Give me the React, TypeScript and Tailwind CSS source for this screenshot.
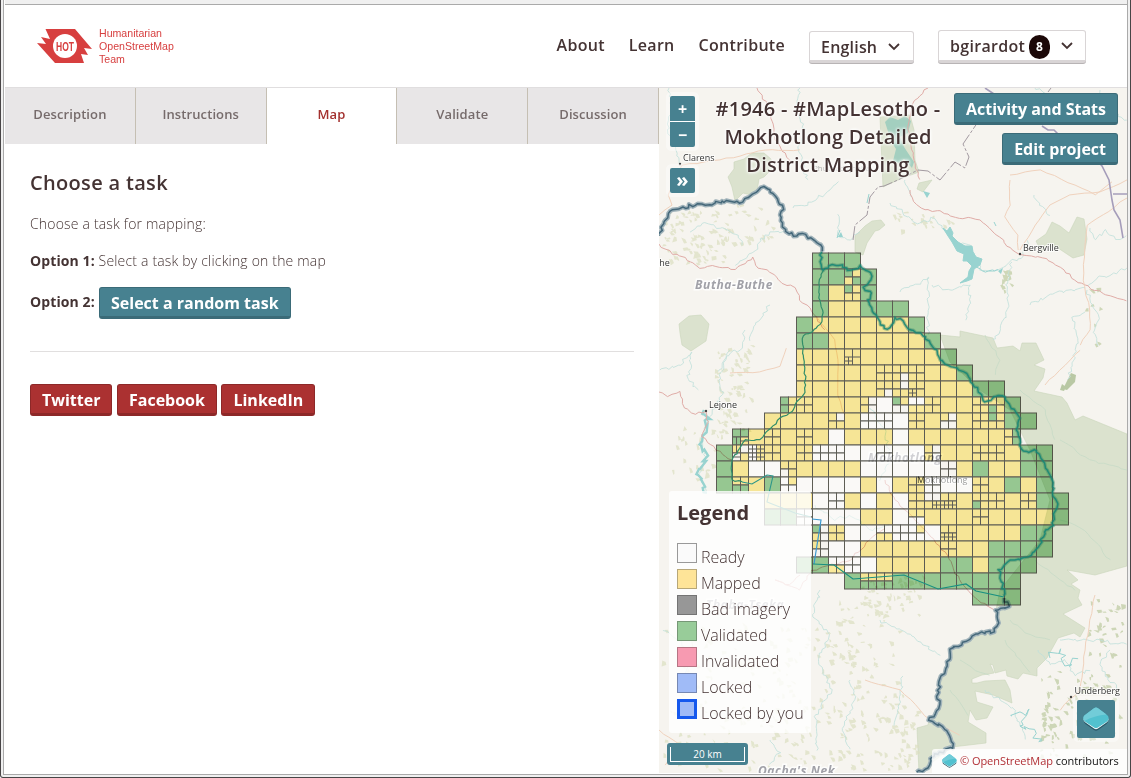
import React from "react";

type Pt = [number, number];

function wiggle(points: Pt[], amp: number, step = 4, seed = 7): string {
  let s = seed;
  const rnd = () => {
    s = (s * 16807) % 2147483647;
    return s / 2147483647 - 0.5;
  };
  let d = `M${points[0][0]} ${points[0][1]}`;
  for (let i = 1; i < points.length; i++) {
    const [x0, y0] = points[i - 1];
    const [x1, y1] = points[i];
    const n = Math.max(1, Math.round(Math.hypot(x1 - x0, y1 - y0) / step));
    for (let k = 1; k <= n; k++) {
      const t = k / n;
      const j = k === n ? 0.5 : 1;
      d += `L${(x0 + (x1 - x0) * t + rnd() * amp * 2 * j).toFixed(1)} ${(y0 + (y1 - y0) * t + rnd() * amp * 2 * j).toFixed(1)}`;
    }
  }
  return d;
}

const ROWS: string[] = [
  "......GGG.............",
  "......GGYG............",
  "......GYYG............",
  "......GYYGGG..........",
  ".....GYYYYYYG.........",
  ".....GGYYYYYYG........",
  ".....YYYYYYYYYG.......",
  ".....YYYYYYYYYYG......",
  ".....YYYYYYYYYYYGG....",
  "....YYYYYYWYWYYYYYG...",
  "...YYYYYYWWWYYYYYYGG..",
  ".GYYYYYWYYYWYYYYYYY...",
  "GYWYYYWWWWWWWYYYYYYGG.",
  "GYWWYYYYYWWWWWYYGYYGG.",
  "GYYGWWWWWYWYYWWWYYGYG.",
  "...YYYWWYWYWYYYYYYYYGG",
  "...GGWWWWYYWWYYYYYYYYG",
  "......GYWWWWWWYYYYYGG.",
  "......YWWYYYYYYYYGGGG.",
  ".....GGWWWYYYYGGYGGG..",
  "........GYYGGGGGGGG...",
  "................GGG...",
];

const QUADS: [number, number, string][] = [
  [8, 1, "GYYG"], [8, 2, "GYYY"], [10, 7, "YYYY"], [11, 7, "YYYW"], [12, 7, "YYYY"],
  [10, 8, "YYYW"], [11, 8, "YWYY"], [12, 8, "YYYY"], [4, 9, "GYGY"], [5, 9, "YYYY"],
  [9, 9, "YWYW"], [11, 9, "GYWW"], [12, 9, "WWYY"], [13, 9, "YYYY"], [16, 9, "YYYY"],
  [17, 9, "YYGY"], [7, 10, "YWYY"], [9, 10, "WWWW"], [10, 10, "WWWW"], [12, 10, "YYYY"],
  [14, 10, "YWWW"], [16, 10, "YYYY"], [17, 10, "GYYY"], [1, 11, "GGGY"], [3, 11, "YYYY"],
  [5, 11, "YYYY"], [18, 11, "YGYG"], [1, 12, "YWWY"], [2, 12, "WYWY"], [3, 12, "YYYY"],
  [5, 12, "YYYY"], [6, 12, "WWWW"], [7, 12, "WWWW"], [10, 12, "WWWW"], [13, 12, "YWYW"],
  [16, 12, "YYYY"], [17, 12, "YYYY"], [4, 13, "YYWY"], [14, 13, "WWWW"], [1, 14, "YYGG"],
  [4, 14, "WYWW"], [12, 14, "YYYY"], [13, 14, "WWWW"], [16, 14, "YYYY"], [7, 15, "WWWW"],
  [12, 15, "YYYY"], [13, 15, "WWYY"], [14, 15, "YYYY"], [16, 15, "YYGY"], [17, 15, "YYYY"],
  [19, 15, "YYYY"], [5, 16, "WWWW"], [12, 16, "YYWW"], [16, 16, "YYYY"], [6, 17, "GWYW"],
  [7, 17, "YYYY"], [10, 17, "WWYY"], [11, 17, "WWWW"], [12, 17, "WYWW"], [14, 17, "YYYY"],
  [6, 18, "YWWW"], [14, 18, "YYYY"], [7, 19, "WWYY"], [8, 19, "WWWW"],
  [9, 20, "YYGG"], [10, 20, "YYGG"],
];

const FILL: Record<string, string> = { Y: "#fff0a0", G: "#9cd09b", W: "#ffffff" };
const X0 = 716.5;
const Y0 = 253;

function TaskGrid() {
  const cells: React.ReactNode[] = [];
  ROWS.forEach((row, r) =>
    row.split("").forEach((ch, c) => {
      if (ch === ".") return;
      const x = X0 + c * 16;
      const y = Y0 + r * 16;
      const quad = QUADS.find((q) => q[0] === c && q[1] === r);
      if (quad) {
        quad[2].split("").forEach((q, i) =>
          cells.push(
            <rect key={`${c}-${r}-${i}`} x={x + (i % 2) * 8} y={y + (i > 1 ? 8 : 0)} width="8" height="8" fill={FILL[q]} />
          )
        );
      } else {
        cells.push(<rect key={`${c}-${r}`} x={x} y={y} width="16" height="16" fill={FILL[ch]} />);
      }
    })
  );
  return (
    <g>
      <g fill="#fff" opacity=".5">
        {ROWS.map((row, r) =>
          row.split("").map((ch, c) =>
            ch === "W" ? <rect key={`${c}-${r}`} x={X0 + c * 16} y={Y0 + r * 16} width="16" height="16" /> : null
          )
        )}
      </g>
      <g className="mix-blend-multiply" stroke="#5f5f58" strokeWidth="1">{cells}</g>
      <g stroke="#5f5f58" strokeWidth="1">
        <path d="M852.5 349v16M844.5 357h16M848.5 357v8M844.5 361h8" />
        <path d="M912.5 389v8M908.5 393h8" />
        <path d="M752.5 445v16M760.5 445v16M748.5 449h16M748.5 457h16M736.5 437v16M732.5 457h8M740.5 441h8" />
        <path d="M936.5 501v8M944.5 501v8M952.5 501v8M932.5 505h24" />
        <path d="M944.5 533v8M952.5 533v8M940.5 537h16" />
        <path d="M868.5 581v8" />
      </g>
    </g>
  );
}

const BORDER_W: Pt[] = [[659,236],[663,224],[673,210],[685,208],[698,203],[712,205],[722,201],[742,202],[752,195],[764,187],[773,193],[783,206],[781,217],[785,229],[793,236],[803,234],[814,241],[821,245],[822,252]];
const BORDER_MID: Pt[] = [[822,252],[820,262],[823,271],[832,265],[842,265],[848,271],[860,266],[870,273],[871,280],[864,287],[872,293],[868,300],[873,311],[878,318],[884,329],[890,327],[895,317],[903,321],[909,330],[920,333],[930,343],[937,350],[940,360],[948,365],[957,368],[968,374],[973,385],[980,393],[985,402],[995,396],[1005,397],[1012,408],[1020,418],[1017,430],[1020,445],[1024,451],[1036,451],[1041,458],[1048,470],[1052,480],[1053,495],[1058,505],[1053,515],[1053,525],[1045,532],[1040,545],[1035,552],[1020,560],[1008,562],[999,570],[1002,582],[1004,596]];
const BORDER_S: Pt[] = [[1004,598],[1009,606],[996,610],[998,620],[995,632],[975,634],[963,643],[950,650],[948,665],[941,677],[938,690],[939,708],[929,720],[943,727],[951,738],[952,748],[940,752],[931,758],[928,768],[916,773]];

const RIVERS: Pt[][] = [
  [[704,410],[708,420],[702,440],[706,458],[698,475],[706,492]],
  [[730,350],[720,375],[722,395],[712,410],[708,422]],
  [[745,330],[740,350],[730,352],[718,372]],
  [[690,232],[705,223],[720,228],[738,235],[742,245]],
  [[786,230],[765,235],[755,250],[735,265]],
  [[793,208],[812,202],[830,190],[838,182]],
  [[770,305],[755,325],[750,340]],
  [[660,370],[680,365],[692,352]],[[692,352],[688,380],[698,390]],
  [[860,232],[850,240],[838,236],[838,215]],
  [[890,203],[903,212],[917,224],[935,218],[945,230],[955,242],[970,245],[980,270],[990,272],[1001,268],[1010,262],[1022,258],[1028,240]],
  [[932,285],[950,290],[970,285],[970,300],[965,320]],
  [[929,277],[928,310],[928,335]],[[900,292],[930,278]],
  [[1012,262],[1006,285],[1009,305],[1000,330],[992,340]],
  [[1034,195],[1040,205],[1050,216]],
  [[1090,228],[1096,240],[1106,230],[1115,240],[1127,236]],
  [[1088,286],[1098,278],[1110,275],[1127,268]],
  [[1087,290],[1092,305],[1100,318],[1094,330],[1098,345]],
  [[1085,312],[1072,318],[1078,340],[1073,360],[1068,380]],
  [[1030,305],[1055,293],[1085,288]],
  [[905,180],[908,187],[912,198]],
  [[800,88],[795,110],[805,130],[798,150],[808,180]],
  [[669,88],[672,105],[668,130],[676,150],[681,165]],
  [[1035,88],[1050,95],[1075,100]],[[1100,90],[1110,110],[1127,120]],
  [[820,590],[812,615],[830,635],[818,660],[832,690],[815,715],[817,750]],
  [[880,620],[910,635],[940,655]],
  [[850,680],[855,700],[842,730],[850,750]],
  [[903,676],[900,700],[894,725]],
  [[1038,650],[1050,665],[1065,660],[1075,675],[1090,670]],
  [[1060,640],[1090,640],[1127,644]],
  [[1110,650],[1100,665],[1108,680],[1120,690]],
  [[985,690],[1000,700],[1015,710],[1025,740]],
  [[815,505],[835,520],[850,515],[870,530],[890,525]],
  [[870,408],[885,430],[890,460],[880,480]],
  [[770,740],[780,752],[770,765]],
  [[663,630],[680,640],[690,660],[680,690]],
];

const PARK_STREAMS: Pt[][] = [
  [[985,335],[1000,360],[995,375]],[[1020,390],[1045,410],[1055,440]],[[1127,470],[1090,460],[1060,440]],
  [[1035,560],[1060,580],[1075,590]],[[1010,620],[1030,635],[1050,640]],[[1005,640],[1020,660],[1030,672]],
  [[1060,520],[1085,530],[1110,560]],[[960,660],[980,672],[990,675]],[[950,690],[962,705],[968,715]],
];

const ROADS_RED: Pt[][] = [
  [[659,244],[672,254],[685,258],[700,268],[715,266],[735,269],[745,264],[753,257],[758,268],[770,272],[782,283],[795,288],[800,300],[812,311],[825,330]],
  [[659,392],[668,396],[680,392],[684,408],[695,414],[706,411],[708,422],[702,436],[716,450],[732,460]],
  [[757,88],[770,110],[775,140],[790,160],[786,170]],
  [[928,88],[914,100],[908,130],[914,160],[920,180]],
  [[910,190],[914,202],[925,210],[940,211],[955,217],[980,220],[1000,237],[1010,248],[1020,254],[1042,258],[1060,267],[1075,280],[1095,290],[1110,296],[1127,301]],
  [[800,575],[790,585],[775,580],[800,590],[812,570],[850,560],[870,540],[885,528]],
  [[885,480],[895,500],[905,510],[925,530],[945,552],[960,580],[975,598],[995,610]],
];
const ROADS_TAN: Pt[][] = [
  [[659,215],[672,205],[668,195],[682,165],[720,160],[765,150],[800,150]],
  [[1010,180],[1010,205],[1005,217],[1018,235],[1018,250]],
  [[1020,250],[1035,225],[1050,205],[1070,195],[1100,192],[1127,180]],
  [[1010,175],[1040,170],[1075,185],[1095,195],[1112,182]],
  [[1127,198],[1108,212],[1087,225],[1085,250],[1083,280],[1090,310],[1090,330],[1080,345]],
  [[1045,385],[1065,365],[1080,350]],
  [[730,373],[760,372],[780,366],[786,348]],
  [[816,316],[835,340],[838,360],[838,395],[845,415]],
  [[1095,595],[1090,620],[1085,650],[1080,690],[1060,710]],
  [[865,680],[900,690],[930,720],[960,735]],
  [[659,730],[680,745],[665,765]],
];

const LAKE = "M943 228l4 3 3-4 3 6-1 3 6 6 7 4 7 0 1 6 3 5 6 2-2 6-6 4-2 10-5 2-7 2 8-6 1-6 3-5-5-5-4 0 1-7-7-3-5-9-4-6z";
const PARK = "M940 335L960 337V331L993 338L997 348L1013 346L1020 351L1022 343L1036 343L1044 360L1034 365L1045 369L1043 378L1034 391L1062 397L1067 403L1075 420L1083 416L1127 434V566L1095 575L1067 570L1078 580L1071 584L1080 590L1078 598L1082 605L1063 614L1085 628L1080 637L1074 633L1058 638L1047 658L1037 668V676L1023 673L1018 679L1007 676L1006 670L995 673L993 665L990 664L994 673L982 675L972 679V683H977L985 681L1005 680L1010 690L1012 703L993 695L975 691L977 702L993 707L987 718L976 720L970 710L968 722L986 733V743L952 747L919 773L917 728L928 725L929 720L940 710L938 690L948 665L950 650L963 643L975 634L995 632L998 620L996 610L1000 590L1040 540L1050 500L1030 450L1010 410L980 390L950 362Z";
const BLUE = "#98d3d0";

function speckles(cx: number, cy: number, w: number, h: number, n: number, seed: number): string {
  let s = seed * 7919;
  const rnd = () => {
    s = (s * 16807) % 2147483647;
    return s / 2147483647;
  };
  let d = "";
  for (let i = 0; i < n; i++) {
    d += `M${(cx + rnd() * w).toFixed(1)} ${(cy + rnd() * h).toFixed(1)}l${(1 + rnd() * 4).toFixed(1)} ${(rnd() * 3 - 1).toFixed(1)}l${(rnd() * 2).toFixed(1)} ${(1 + rnd() * 3).toFixed(1)}l-${(1 + rnd() * 4).toFixed(1)} ${(rnd() * 2).toFixed(1)}z`;
  }
  return d;
}

function District({ x, y, size = 12, children }: { x: number; y: number; size?: number; children: string }) {
  return (
    <text x={x} y={y} fontSize={size} fontStyle="italic" fontWeight="700" letterSpacing=".6" fill="#a1a1a8" stroke="#fff" strokeWidth="3" strokeOpacity=".8" paintOrder="stroke">
      {children}
    </text>
  );
}

function Place({ x, y, dx, dy, children }: { x: number; y: number; dx?: number; dy?: number; children: string }) {
  return (
    <g>
      {dx !== undefined && <circle cx={dx} cy={dy} r="1.2" fill="#444" />}
      <text x={x} y={y} fontSize="9" fill="#333" stroke="#fff" strokeWidth="2" strokeOpacity=".7" paintOrder="stroke">{children}</text>
    </g>
  );
}

function MapCanvas() {
  return (
    <svg viewBox="659 88 468 685" className="block h-full w-full" fontFamily="'Open Sans', 'Noto Sans', sans-serif" fill="none">
      <rect x="659" y="88" width="468" height="685" fill="#f6f4ef" />
      <g fill="#dbe2ce" stroke="#cad5ba" strokeWidth=".6">
        <path d="M734 162l10-3 8-6h12l7 6 1 10-8 8-5 2-2 12-6 4-8-2-8 8-3-14-4-10 6-8z" />
        <path d="M880 117l30-2 4 15 1 30 4 12-19 7-17 8z" />
        <path d="M919 183l13-3-9 12-6-3z" />
        <path d="M855 252v-16l10-10 7-5 9-1 4 5-6 5-4 1-8 12-4 12z" />
        <path d="M679 324l10-8 12-1 8 9-3 17-15 10-9-6-2-12z" />
        <path d={PARK} />
        <path d="M1036 241l10-7 6-12 8 4 9 7 8-16 7 2 3 20-3 16-11 3-15-10-11-2-6 7-2-6z" />
      </g>
      <path d="M1071 373l5 2-1 7-8 8-4-1zM1062 384l4 3-2 4-4-1z" fill="#b9c8a4" />
      <g fill="#dcdfc1" opacity=".7">
        <path d={speckles(662, 208, 65, 55, 80, 2)} />
        <path d={speckles(722, 200, 50, 45, 28, 3)} />
        <path d={speckles(715, 345, 35, 90, 75, 4)} />
        <path d={speckles(662, 620, 150, 150, 150, 5)} />
        <path d={speckles(812, 600, 90, 170, 150, 6)} />
        <path d={speckles(862, 575, 60, 40, 50, 8)} />
        <path d={speckles(897, 700, 20, 65, 24, 9)} />
        <path d={speckles(892, 212, 60, 18, 18, 10)} />
        <path d={speckles(670, 425, 45, 55, 24, 31)} />
      </g>
      <g fill="#bdcaa0" opacity=".7">
        <path d={speckles(1088, 595, 35, 60, 28, 11)} />
        <path d={speckles(1040, 665, 80, 90, 80, 12)} />
        <path d={speckles(1040, 705, 15, 40, 25, 14)} />
        <path d={speckles(1000, 270, 10, 18, 16, 15)} />
        <path d={speckles(1080, 285, 20, 60, 8, 16)} />
      </g>
      <g stroke="#bfdfdb" strokeWidth=".8">
        {RIVERS.map((p, i) => <path key={i} d={wiggle(p, 1.7, 3, i + 11)} />)}
      </g>
      <g stroke="#c6dac7" strokeWidth=".8">
        {PARK_STREAMS.map((p, i) => <path key={i} d={wiggle(p, 1.2, 5, i + 40)} />)}
      </g>
      <path d={wiggle(RIVERS[0], 3.2, 3, 90)} stroke={BLUE} strokeWidth="2.4" />
      <path d={LAKE} fill={BLUE} stroke={BLUE} strokeWidth="1" />
      <path d="M885 122l5-5 8 3 7-4 6 5-3 12-8 4 4 10 10 15-2 6-8-9-5 4-6-2 3-12-5-8z" fill="#a3cfbf" />
      <path d="M923 191l7 2-3 5zM998 271l5-3-2 6zM838 237l3-5 2 5z" fill={BLUE} />
      <g stroke={BLUE} strokeWidth="1">
        <path d={wiggle([[1050,658],[1060,650],[1065,665],[1077,660]], 4, 3, 99)} />
        <path d={wiggle([[1012,716],[1028,710],[1022,725],[1044,740]], 4, 3, 103)} />
        <path d={wiggle([[975,265],[985,272],[998,270]], 1, 3, 104)} />
        <path d="M869 194l-2 9M840 230l-3 8M994 222l2 4" />
      </g>
      <g stroke="#e0aca7" strokeWidth="1">
        {ROADS_RED.map((p, i) => <path key={i} d={wiggle(p, 1.2, 4, i + 60)} />)}
      </g>
      <g stroke="#f0d2bd" strokeWidth="1">
        {ROADS_TAN.map((p, i) => <path key={i} d={wiggle(p, 0.7, 7, i + 80)} />)}
      </g>
      <path d="M985 88l12 8M1042 126l6 4 6 0 6 6 12 2 14 10 16 18 7 14 3 20 2 10 6 10 3 18M1113 194h14" stroke="#a59dba" strokeWidth="1.6" />
      <path d="M853 240l2-15 12-10 3-18 8-10 6-1 14-6 20-10 10 1 12 9 15-18 10 6 4-11-6-13 19-28 14 4 12-6M1048 92l6-8" stroke="#a39aa1" strokeWidth="1" strokeDasharray="14 2 3 2" />
      <Place x={683} y={161} dx={680} dy={164}>Clarens</Place>
      <Place x={1023} y={251} dx={1020} dy={254}>Bergville</Place>
      <Place x={709} y={408} dx={706} dy={411}>Lejone</Place>
      <Place x={1074.5} y={694} dx={1071} dy={697}>Underberg</Place>
      <Place x={656} y={266}>the</Place>
      <Place x={917} y={483}>Mokhotlong</Place>
      <text x="813" y="171" fontSize="8" fill="#aaa">Phuthaditjhaba</text>
      <District x={695} y={289}>Butha-Buthe</District>
      <District x={868} y={462}>Mokhotlong</District>
      <District x={706} y={609}>Thaba-Tseka</District>
      <District x={758} y={775}>Qacha's Nek</District>
      {[BORDER_W, BORDER_S].map((p, i) => (
        <g key={i} strokeLinejoin="round">
          <path d={wiggle(p, 1.7, 3, 21 + i)} stroke="#a0b2b9" strokeWidth="4.4" />
          <path d={wiggle(p, 1.7, 3, 21 + i)} stroke="#45687a" strokeWidth="1.5" />
        </g>
      ))}
      <TaskGrid />
      <path d={wiggle(BORDER_MID, 1.5, 3, 33)} stroke="#3b8267" strokeOpacity=".4" strokeWidth="3.6" strokeLinejoin="round" />
      <path d={wiggle(BORDER_MID, 1.5, 3, 33)} stroke="#138675" strokeWidth="1.5" strokeOpacity=".85" />
      <path d={wiggle([[823,271],[819,283],[819,298],[823,310],[822,322],[812,332],[803,336],[803,350],[805,370],[805,392],[797,402],[792,412],[780,418],[771,428],[760,440],[745,440],[740,448],[733,458],[731,468],[732,480],[742,482]], 0.9, 3, 51)} stroke="#318d69" strokeWidth="1.2" />
      <path d="M742 482l10 2 15-9 6 1-6 26 28 11 16 4" stroke="#2c9589" strokeWidth="1.1" />
      <path d="M812 519l9 1-7 44" stroke="#3a98d0" strokeWidth="1.2" />
      <path d="M813 564l21 1 19 14 51-4 34 14 28-5 10 7 28 6" stroke="#189080" strokeWidth="1.2" />
    </svg>
  );
}

function Layers({ className }: { className: string }) {
  return (
    <svg viewBox="0 0 26 24" className={className}>
      <path d="M1 14q0 2 1.500 3L11 23q2 1.500 4 0l8.500-6q1.500-1 1.500-3l-2-3H3z" fill="#2b5968" />
      <path d="M.5 12q0 2 2 3.500l8.500 6q2 1.300 4 0l8.500-6q2-1.500 2-3.500l-2-2h-21z" fill="#fff" />
      <path d="M11 1.200q2-1.500 4 0l9 6.800q2 1.500 1.500 4 0 1.500-2 3L15 20.500q-2 1.300-4 0L2.500 15q-2-1.500-2-3Q0 9.500 2 8z" fill="#52c1cf" />
      <path d="M11 1.200q2-1.500 4 0l8.500 6.300Q11 8.500 1.500 14 0 12 .5 10q.5-1.500 1.500-2z" fill="#72ccd8" />
    </svg>
  );
}

const TEAL_BTN = "box-border flex h-8 items-center rounded-[3px] border border-b-[3px] border-[#3b6b78] bg-[#478190] px-[11px] pt-[2px] text-[16px] font-bold leading-[26px] text-white whitespace-nowrap";
const RED_BTN = "box-border flex h-8 items-center rounded-[3px] border border-b-[3px] border-[#8d2828] bg-[#ab3131] px-[11px] pt-[2px] text-[16px] font-bold leading-[26px] text-white whitespace-nowrap";

function Chevron() {
  return (
    <svg viewBox="0 0 12 8" className="h-2 w-3" fill="none" stroke="#433" strokeWidth="1.8">
      <path d="M1 1l5 5 5-5" />
    </svg>
  );
}

function Header() {
  return (
    <header className="flex h-[83px] shrink-0 border-b border-[#e0dedf] bg-white pl-8 pr-[41px]">
      <div className="mt-[23px] flex">
        <svg viewBox="0 0 56 36" className="h-9 w-14" aria-label="HOT">
          <path d="M8.500 1h29.500l17 20-8-1 4 7-7-1 3 9H18L0 15l9 1-5-7 9 2z" fill="#d73f3f" />
          <circle cx="28" cy="18" r="12" fill="#fff" />
          <text x="28" y="22.500" textAnchor="middle" fontFamily="'Liberation Sans', sans-serif" fontSize="12" fontWeight="700" fill="#d73f3f" textLength="18" lengthAdjust="spacingAndGlyphs">HOT</text>
        </svg>
        <div className="-mt-px ml-[6px] font-['Liberation_Sans',sans-serif] text-[10.600px] leading-[13px] text-[#d73f3f] whitespace-nowrap">
          Humanitarian<br />OpenStreetMap<br />Team
        </div>
      </div>
      <nav className="ml-auto flex text-[16px] font-semibold tracking-[0.300px] text-[#433]">
        <span className="mt-[28px] mr-[24px] leading-6">About</span>
        <span className="mt-[28px] mr-[24px] leading-6">Learn</span>
        <span className="mt-[28px] mr-[24px] leading-6">Contribute</span>
        <button className="mt-[26px] mr-6 flex h-8 w-[105px] items-center justify-between rounded-[3px] border border-b-[3px] border-[#d9d5d6] bg-white pl-[11px] pr-[13px] pt-[2px] font-semibold tracking-[0.200px] shadow-[0_1px_0_#b8b4b5]">
          English <Chevron />
        </button>
        <button className="mt-[25px] flex h-[33px] w-[148px] items-center rounded-[3px] border border-b-[3px] border-[#d9d5d6] bg-white pl-[11px] pr-3 font-semibold tracking-[0.300px] shadow-[0_1px_0_#b8b4b5]">
          bgirardot
          <span className="ml-1 mt-[2px] flex h-6 w-[21px] items-center justify-center rounded-full bg-[#1c0808] text-[12px] font-bold text-white">8</span>
          <span className="ml-auto"><Chevron /></span>
        </button>
      </nav>
    </header>
  );
}

function TaskPanel() {
  return (
    <main className="w-[654px] shrink-0 bg-white">
      <div className="flex h-14 text-[13px] font-semibold tracking-[0.100px]">
        {["Description", "Instructions", "Map", "Validate", "Discussion"].map((t) => (
          <div
            key={t}
            className={`flex w-[130.800px] items-start justify-center border-r border-[#c5bfb3] pt-4 leading-5 ${t === "Map" ? "bg-white text-[#a3312f]" : "bg-[#e8e6e7] text-[#766b6b]"}`}
          >
            {t}
          </div>
        ))}
      </div>
      <div className="px-[25px] pt-[23px]">
        <h1 className="text-[20px] font-semibold leading-8 tracking-[0.320px] text-[#433]">Choose a task</h1>
        <p className="mt-[15px] text-[14px] font-light leading-5 tracking-[0.180px] text-[#433]">Choose a task for mapping:</p>
        <p className="mt-[17px] text-[14px] font-light leading-5 tracking-[0.180px] text-[#433]"><b className="font-bold tracking-[0.100px]">Option 1:</b> Select a task by clicking on the map</p>
        <div className="mt-4 flex items-center">
          <b className="-mt-[3px] mr-[3px] w-[66px] text-[14px] font-bold tracking-[0.100px] whitespace-nowrap text-[#433]">Option 2:</b>
          <button className={TEAL_BTN}>Select a random task</button>
        </div>
        <div className="mt-8 h-px w-[604px] bg-[#e1dfdf]" />
        <div className="mt-8 flex gap-[4.500px]">
          <button className={RED_BTN}>Twitter</button>
          <button className={RED_BTN}>Facebook</button>
          <button className={RED_BTN}>LinkedIn</button>
        </div>
      </div>
    </main>
  );
}

const LEGEND: [string, string][] = [
  ["Ready", "bg-[#fafafa] border border-[#999]"],
  ["Mapped", "bg-[#fee498] border border-[#b7a778]"],
  ["Bad imagery", "bg-[#979797] border border-[#747474]"],
  ["Validated", "bg-[#98cc99] border border-[#769776]"],
  ["Invalidated", "bg-[#f79ab1] border border-[#b67584]"],
  ["Locked", "bg-[#a0bbf7] border border-[#7688b3]"],
  ["Locked by you", "bg-[#a0bbf7] border-[3px] border-[#1659ed]"],
];

function MapPanel() {
  const ctl = "flex h-[25px] w-[25px] items-center justify-center bg-[#478190] text-[16px] font-bold leading-none text-white";
  return (
    <section className="relative min-w-0 flex-1 overflow-hidden">
      <MapCanvas />
      <div className="absolute left-[11px] top-2 flex flex-col rounded-[2px] bg-white shadow-[0_0_0_4px_rgba(255,255,255,0.4)]">
        <span className={`${ctl} rounded-t-[2px]`}>+</span>
        <span className={`${ctl} mt-px rounded-b-[2px]`}>−</span>
      </div>
      <div className="absolute left-[11px] top-20 rounded-[2px] shadow-[0_0_0_4px_rgba(255,255,255,0.4)]">
        <span className={`${ctl} rounded-[2px] pb-[2px] text-[20px]`}>»</span>
      </div>
      <h2 className="absolute left-[49px] top-[7px] w-[240px] text-center text-[20px] font-semibold leading-7 tracking-[0.250px] text-[#433] [text-shadow:0_0_3px_#fff,0_0_3px_#fff,0_0_4px_#fff]">
        #1946 - #MapLesotho -<br />Mokhotlong Detailed<br />District Mapping
      </h2>
      <div className="absolute right-[9px] top-[5px] flex flex-col items-end gap-2">
        <button className={TEAL_BTN}>Activity and Stats</button>
        <button className={TEAL_BTN}>Edit project</button>
      </div>
      <div className="absolute left-[10px] top-[403px] h-[242px] w-[142px] rounded-[3px] bg-white/80 pl-2 pt-[6px] text-[#433]">
        <h3 className="text-[20px] font-bold leading-8">Legend</h3>
        <ul className="mt-[14px]">
          {LEGEND.map(([name, cls]) => (
            <li key={name} className="flex h-[26px] text-[16px] font-light leading-7 whitespace-nowrap">
              <span className={`mr-1 h-5 w-5 shrink-0 ${cls}`} />
              {name}
            </li>
          ))}
        </ul>
      </div>
      <div className="absolute left-2 top-[655px] flex h-[22px] w-[81px] rounded-[3px] bg-[#478190] p-[3px] pt-1">
        <span className="flex-1 border border-t-0 border-white text-center text-[10px] leading-[14px] text-white">20 km</span>
      </div>
      <div className="absolute right-3 top-[612px] flex h-[38px] w-[38px] items-center justify-center rounded-[2px] bg-[#478190] shadow-[0_0_0_4px_rgba(255,255,255,0.4)]">
        <Layers className="h-6 w-[26px]" />
      </div>
      <div className="absolute bottom-0 right-0 flex h-6 w-[195px] items-center rounded-tl-[3px] bg-white/80 pl-[10px] text-[11px] tracking-[-0.050px] text-[#111] whitespace-nowrap">
        <Layers className="mr-[3px] h-[14px] w-[15px]" />
        <span className="text-[#b12f35]">© OpenStreetMap</span>&nbsp;contributors
      </div>
    </section>
  );
}

export default function App() {
  return (
    <div className="h-[778px] w-[1131px] overflow-hidden rounded-b-[3px] border-x border-b border-[#484546] bg-[#f0f0f0] pl-[2px] pr-[2px] pb-[2px] font-['Open_Sans','Noto_Sans',sans-serif]">
      <div className="flex h-[775px] flex-col border border-t-0 border-[#aaa] bg-white pl-px">
        <div className="h-[5px] shrink-0 border-b border-[#aaa] bg-[#f0f0f0]" />
        <Header />
        <div className="flex h-[685px]">
          <TaskPanel />
          <MapPanel />
        </div>
      </div>
    </div>
  );
}
